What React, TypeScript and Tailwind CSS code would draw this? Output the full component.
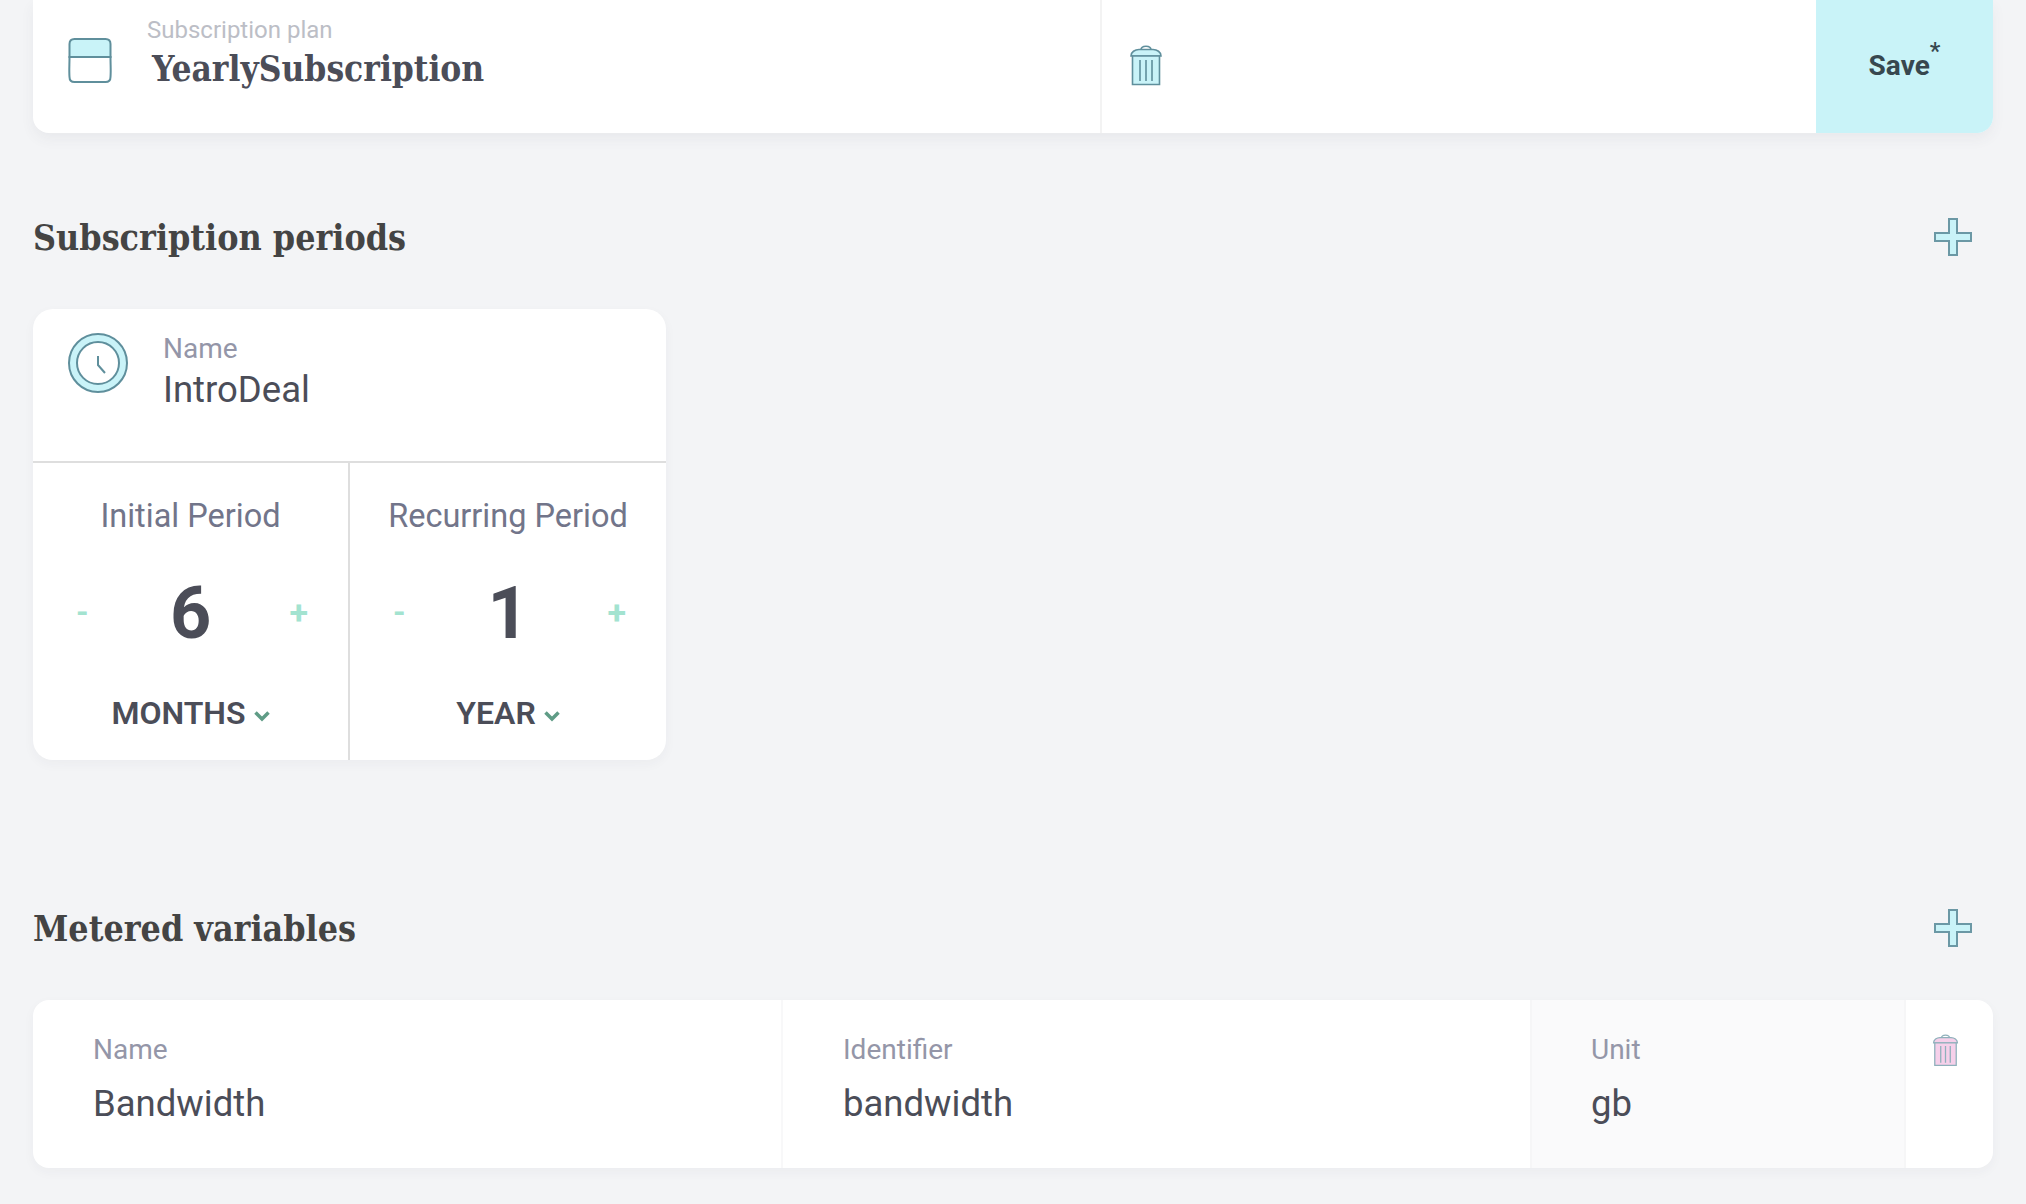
const SANS = "font-['Roboto',sans-serif]";
const SLAB = "font-['DejaVu_Serif_Condensed',serif]";

function TrashIcon({ fill, stroke, className }: { fill: string; stroke: string; className: string }) {
  return (
    <svg viewBox="0 0 34 42" className={className} fill="none" stroke={stroke} strokeWidth="1.6">
      <path d="M12 6c0-5 10-5 10 0" />
      <path d="M2 12c0-4 4-6.500 8-6.500h14c4 0 8 2.500 8 6.500z" fill={fill} />
      <path d="M3.500 12h27v28.500h-27z" fill={fill} />
      <path d="M11 16v21M17 16v21M23 16v21" />
    </svg>
  );
}

function PlusIcon() {
  return (
    <svg viewBox="0 0 38 38" className="h-[38px] w-[38px]" fill="#c9f3f8" stroke="#6b98a5" strokeWidth="2">
      <path d="M15 1h8v14h14v8H23v14h-8V23H1v-8h14z" />
    </svg>
  );
}

function Chevron() {
  return (
    <svg viewBox="0 0 16 12" className="mt-[5px] h-[12px] w-[16px]" fill="none" stroke="#5f9c86" strokeWidth="3.500">
      <path d="M1.500 2.500 8 9l6.500-6.500" />
    </svg>
  );
}

function PeriodColumn(props: { title: string; value: string; unit: string; border?: boolean }) {
  return (
    <div className={`flex flex-col items-center ${props.border ? "w-[317px] border-r-2 border-[#dedede]" : "flex-1"}`}>
      <div className="mt-[33px] text-[32.5px] leading-[40px] text-[#72758a]">{props.title}</div>
      <div className="mt-[36px] flex h-[80px] w-full items-center justify-between pr-[40px] pl-[43px]">
        <span className="text-[32px] font-bold text-[#a3e3d0]">-</span>
        <span className="mt-[3px] ml-[3px] text-[72px] leading-[80px] font-bold text-[#4b4d58]">{props.value}</span>
        <span className="text-[34px] font-bold text-[#a3e3d0]">+</span>
      </div>
      <div className="mt-[41px] flex items-center gap-[8px] text-[32px] leading-[40px] font-semibold text-[#4b4d58]">
        {props.unit}
        <Chevron />
      </div>
    </div>
  );
}

function MeteredCell(props: { label: string; value: string; className: string }) {
  return (
    <div className={props.className}>
      <div className="text-[28px] leading-[36px] text-[#9496a8]">{props.label}</div>
      <div className="mt-[14px] text-[36.500px] leading-[44px] text-[#4b4d58]">{props.value}</div>
    </div>
  );
}

export default function App() {
  return (
    <div className={`h-[1204px] overflow-hidden bg-[#f3f4f6] pr-[33px] pl-[33px] ${SANS}`}>
      <div className="flex h-[133px] rounded-b-[16px] bg-white shadow-[0_6px_14px_rgba(60,60,80,0.06)]">
        <div className="flex w-[1069px] border-r-2 border-[#f3f3f3]">
          <svg viewBox="0 0 44 46" className="mt-[38px] ml-[35px] h-[46px] w-[44px]" fill="none" stroke="#5f8f9c" strokeWidth="2">
            <path d="M1.500 19V6c0-3 2-5 5-5h31c3 0 5 2 5 5v13z" fill="#c9f3f8" />
            <path d="M1.500 19h41c0 8 .5 14 0 20 0 3-2 5-5 5h-31c-3 0-5-2-5-5-.5-6 0-12 0-20z" />
          </svg>
          <div className="ml-[35px]">
            <div className="mt-[15px] text-[24px] leading-[30px] text-[#bcbec6]">Subscription plan</div>
            <div className={`mt-[2px] ml-[5px] text-[35px] leading-[44px] font-bold text-[#4b4d58] ${SLAB}`}>YearlySubscription</div>
          </div>
        </div>
        <div className="flex-1 pt-[44px] pl-[27px]">
          <TrashIcon fill="#c9f3f8" stroke="#5f8f9c" className="h-[42px] w-[34px]" />
        </div>
        <div className="flex w-[177px] items-center justify-center rounded-br-[16px] bg-[#c9f3f8] pb-[2px] text-[28px] font-bold text-[#37474f]">
          Save<sup className="mb-[6px] text-[24px] font-medium">*</sup>
        </div>
      </div>

      <div className="mt-[76px] flex h-[56px] items-center justify-between pr-[21px]">
        <h2 className={`pt-[2px] text-[35.500px] font-bold text-[#444444] ${SLAB}`}>Subscription periods</h2>
        <PlusIcon />
      </div>

      <div className="mt-[44px] w-[633px] rounded-[20px] bg-white shadow-[0_4px_12px_rgba(60,60,80,0.04)]">
        <div className="flex h-[154px] border-b-2 border-[#dedede]">
          <svg viewBox="0 0 60 60" className="mt-[24px] ml-[35px] h-[60px] w-[60px]" fill="none" stroke="#5f8f9c" strokeWidth="2">
            <circle cx="30" cy="30" r="29" fill="#c9f3f8" />
            <circle cx="30" cy="30" r="21" fill="#ffffff" />
            <path d="M30 23v9l7 8" />
          </svg>
          <div className="ml-[35px]">
            <div className="mt-[22px] text-[28px] leading-[36px] text-[#9496a8]">Name</div>
            <div className="mt-[1px] text-[36.500px] leading-[44px] text-[#4b4d58]">IntroDeal</div>
          </div>
        </div>
        <div className="flex h-[297px]">
          <PeriodColumn title="Initial Period" value="6" unit="MONTHS" border />
          <PeriodColumn title="Recurring Period" value="1" unit="YEAR" />
        </div>
      </div>

      <div className="mt-[140px] flex h-[56px] items-center justify-between pr-[21px]">
        <h2 className={`pt-[2px] text-[35.500px] font-bold text-[#444444] ${SLAB}`}>Metered variables</h2>
        <PlusIcon />
      </div>

      <div className="mt-[44px] flex h-[168px] rounded-[16px] bg-white shadow-[0_4px_12px_rgba(60,60,80,0.04)]">
        <MeteredCell label="Name" value="Bandwidth" className="w-[750px] border-r-2 border-[#f8f8f9] pt-[32px] pl-[60px]" />
        <MeteredCell label="Identifier" value="bandwidth" className="w-[747px] pt-[32px] pl-[60px]" />
        <MeteredCell label="Unit" value="gb" className="w-[376px] border-x-2 border-[#f6f6f7] bg-[#fafafb] pt-[32px] pl-[59px]" />
        <div className="flex-1 pt-[33px] pl-[26px]">
          <TrashIcon fill="#f6d0ea" stroke="#8fb0bb" className="h-[34px] w-[27px]" />
        </div>
      </div>
    </div>
  );
}
